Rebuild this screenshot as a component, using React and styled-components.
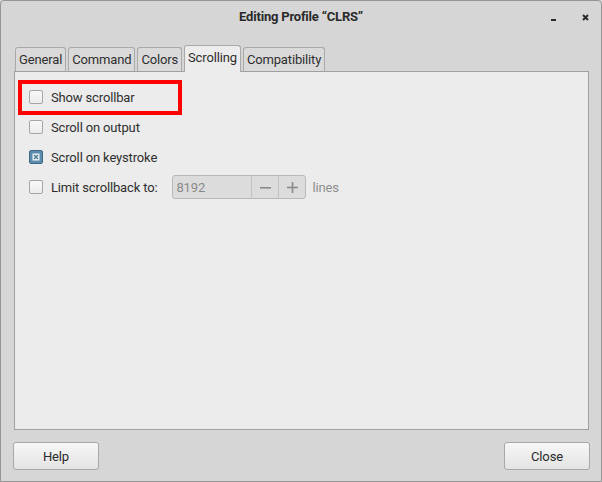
import React from "react";
import styled, { createGlobalStyle } from "styled-components";

const Global = createGlobalStyle`
  html, body { margin: 0; padding: 0; background: #d6d6d6; }
  body { font-family: Roboto, "Liberation Sans", sans-serif; font-size: 13px; color: #2f2f2f; letter-spacing: -0.15px; }
`;

const Window = styled.div`
  box-sizing: border-box;
  width: 602px;
  height: 482px;
  border: 1px solid #959595;
  border-radius: 4px 4px 0 0;
  background: #d6d6d6;
  display: flex;
  flex-direction: column;
`;

const TitleBar = styled.div`
  height: 31px;
  display: flex;
  align-items: center;
  justify-content: center;
  position: relative;
  flex: none;
`;

const Title = styled.div`
  font-weight: 700;
  font-size: 13px;
  color: #2a2a2a;
  letter-spacing: -0.2px;
`;

const Controls = styled.div`
  position: absolute;
  right: 12px;
  top: 13px;
  display: flex;
  gap: 26px;
  align-items: flex-start;
`;

const Body = styled.div`
  flex: 1;
  display: flex;
  flex-direction: column;
  padding: 14px 12px 11px 13px;
  min-height: 0;
`;

const TabBar = styled.div`
  display: flex;
  align-items: flex-end;
  gap: 2px;
  padding-left: 1px;
  height: 26px;
  position: relative;
  z-index: 1;
  margin-bottom: -1px;
`;

const Tab = styled.div`
  box-sizing: border-box;
  height: ${(p) => (p.$active ? "27px" : "25px")};
  padding: 0 3px;
  display: flex;
  align-items: center;
  padding-bottom: ${(p) => (p.$active ? "3px" : "0")};
  border: 1px solid #a9a9a9;
  border-bottom: ${(p) => (p.$active ? "none" : "1px solid #a0a0a0")};
  border-radius: 3px 3px 0 0;
  background: ${(p) => (p.$active ? "#ececec" : "#dadada")};
  color: #2f2f2f;
`;

const Panel = styled.div`
  flex: 1;
  position: relative;
  background: #ececec;
  border: 1px solid #a0a0a0;
  padding: 10px 14px;
  display: flex;
  flex-direction: column;
`;

const Row = styled.div`
  height: 30px;
  display: flex;
  align-items: center;
  gap: 8px;
`;

const Box = styled.div`
  box-sizing: border-box;
  width: 14px;
  height: 14px;
  border-radius: 2px;
  border: 1px solid ${(p) => (p.$checked ? "#3e6a86" : "#a6a6a6")};
  background: ${(p) => (p.$checked ? "#5b8cae" : "linear-gradient(#f8f8f8, #ececec)")};
  display: flex;
  align-items: center;
  justify-content: center;
  flex: none;
`;

const Label = styled.span`
  color: #2f2f2f;
  margin-right: 7px;
`;

const Spin = styled.div`
  display: flex;
  height: 24px;
  box-sizing: border-box;
  border: 1px solid #b9b9b9;
  border-radius: 3px;
  background: #dcdcdc;
  overflow: hidden;
`;

const SpinField = styled.div`
  width: 78px;
  padding-left: 3px;
  box-sizing: border-box;
  display: flex;
  align-items: center;
  color: #8a8a8a;
`;

const SpinBtn = styled.div`
  width: 26px;
  border-left: 1px solid #c2c2c2;
  display: flex;
  align-items: center;
  justify-content: center;
`;

const Muted = styled.span`
  color: #8e8e8e;
  margin-left: -2px;
`;

const Highlight = styled.div`
  position: absolute;
  left: 3px;
  top: 8px;
  width: 164px;
  height: 35px;
  box-sizing: border-box;
  border: 4px solid #ff0000;
  pointer-events: none;
`;

const Footer = styled.div`
  display: flex;
  justify-content: space-between;
  padding-top: 12px;
  margin: 0 -1px;
  flex: none;
`;

const Button = styled.button`
  width: 86px;
  height: 28px;
  box-sizing: border-box;
  border: 1px solid #a8a8a8;
  border-radius: 3px;
  background: linear-gradient(#f7f7f7, #e3e3e3);
  font-family: inherit;
  font-size: 13px;
  letter-spacing: inherit;
  color: #2a2a2a;
  padding: 0;
`;

const CheckMark = () => (
  <svg width="8" height="8" viewBox="0 0 8 8">
    <rect x="0.5" y="0.5" width="7" height="7" fill="#eef3f6" />
    <path d="M2 2 L6 6 M6 2 L2 6" stroke="#4a7896" strokeWidth="1.4" />
  </svg>
);

const Check = ({ checked }) => (
  <Box $checked={checked}>{checked && <CheckMark />}</Box>
);

export default function App() {
  return (
    <>
      <Global />
      <Window>
        <TitleBar>
          <Title>Editing Profile “CLRS”</Title>
          <Controls>
            <svg width="5" height="7" viewBox="0 0 5 7">
              <rect x="0" y="5" width="5" height="2" fill="#2a2a2a" />
            </svg>
            <svg width="7" height="7" viewBox="0 0 7 7">
              <path d="M1 1 L6 6 M6 1 L1 6" stroke="#2a2a2a" strokeWidth="2" />
            </svg>
          </Controls>
        </TitleBar>
        <Body>
          <TabBar>
            <Tab>General</Tab>
            <Tab>Command</Tab>
            <Tab>Colors</Tab>
            <Tab $active>Scrolling</Tab>
            <Tab>Compatibility</Tab>
          </TabBar>
          <Panel>
            <Row>
              <Check />
              <Label>Show scrollbar</Label>
            </Row>
            <Row>
              <Check />
              <Label>Scroll on output</Label>
            </Row>
            <Row>
              <Check checked />
              <Label>Scroll on keystroke</Label>
            </Row>
            <Row>
              <Check />
              <Label>Limit scrollback to:</Label>
              <Spin>
                <SpinField>8192</SpinField>
                <SpinBtn>
                  <svg width="11" height="11" viewBox="0 0 11 11">
                    <rect x="0" y="5" width="11" height="1.6" fill="#8a8a8a" />
                  </svg>
                </SpinBtn>
                <SpinBtn>
                  <svg width="11" height="11" viewBox="0 0 11 11">
                    <rect x="0" y="4.7" width="11" height="1.6" fill="#8a8a8a" />
                    <rect x="4.7" y="0" width="1.6" height="11" fill="#8a8a8a" />
                  </svg>
                </SpinBtn>
              </Spin>
              <Muted>lines</Muted>
            </Row>
            <Highlight />
          </Panel>
          <Footer>
            <Button>Help</Button>
            <Button>Close</Button>
          </Footer>
        </Body>
      </Window>
    </>
  );
}
